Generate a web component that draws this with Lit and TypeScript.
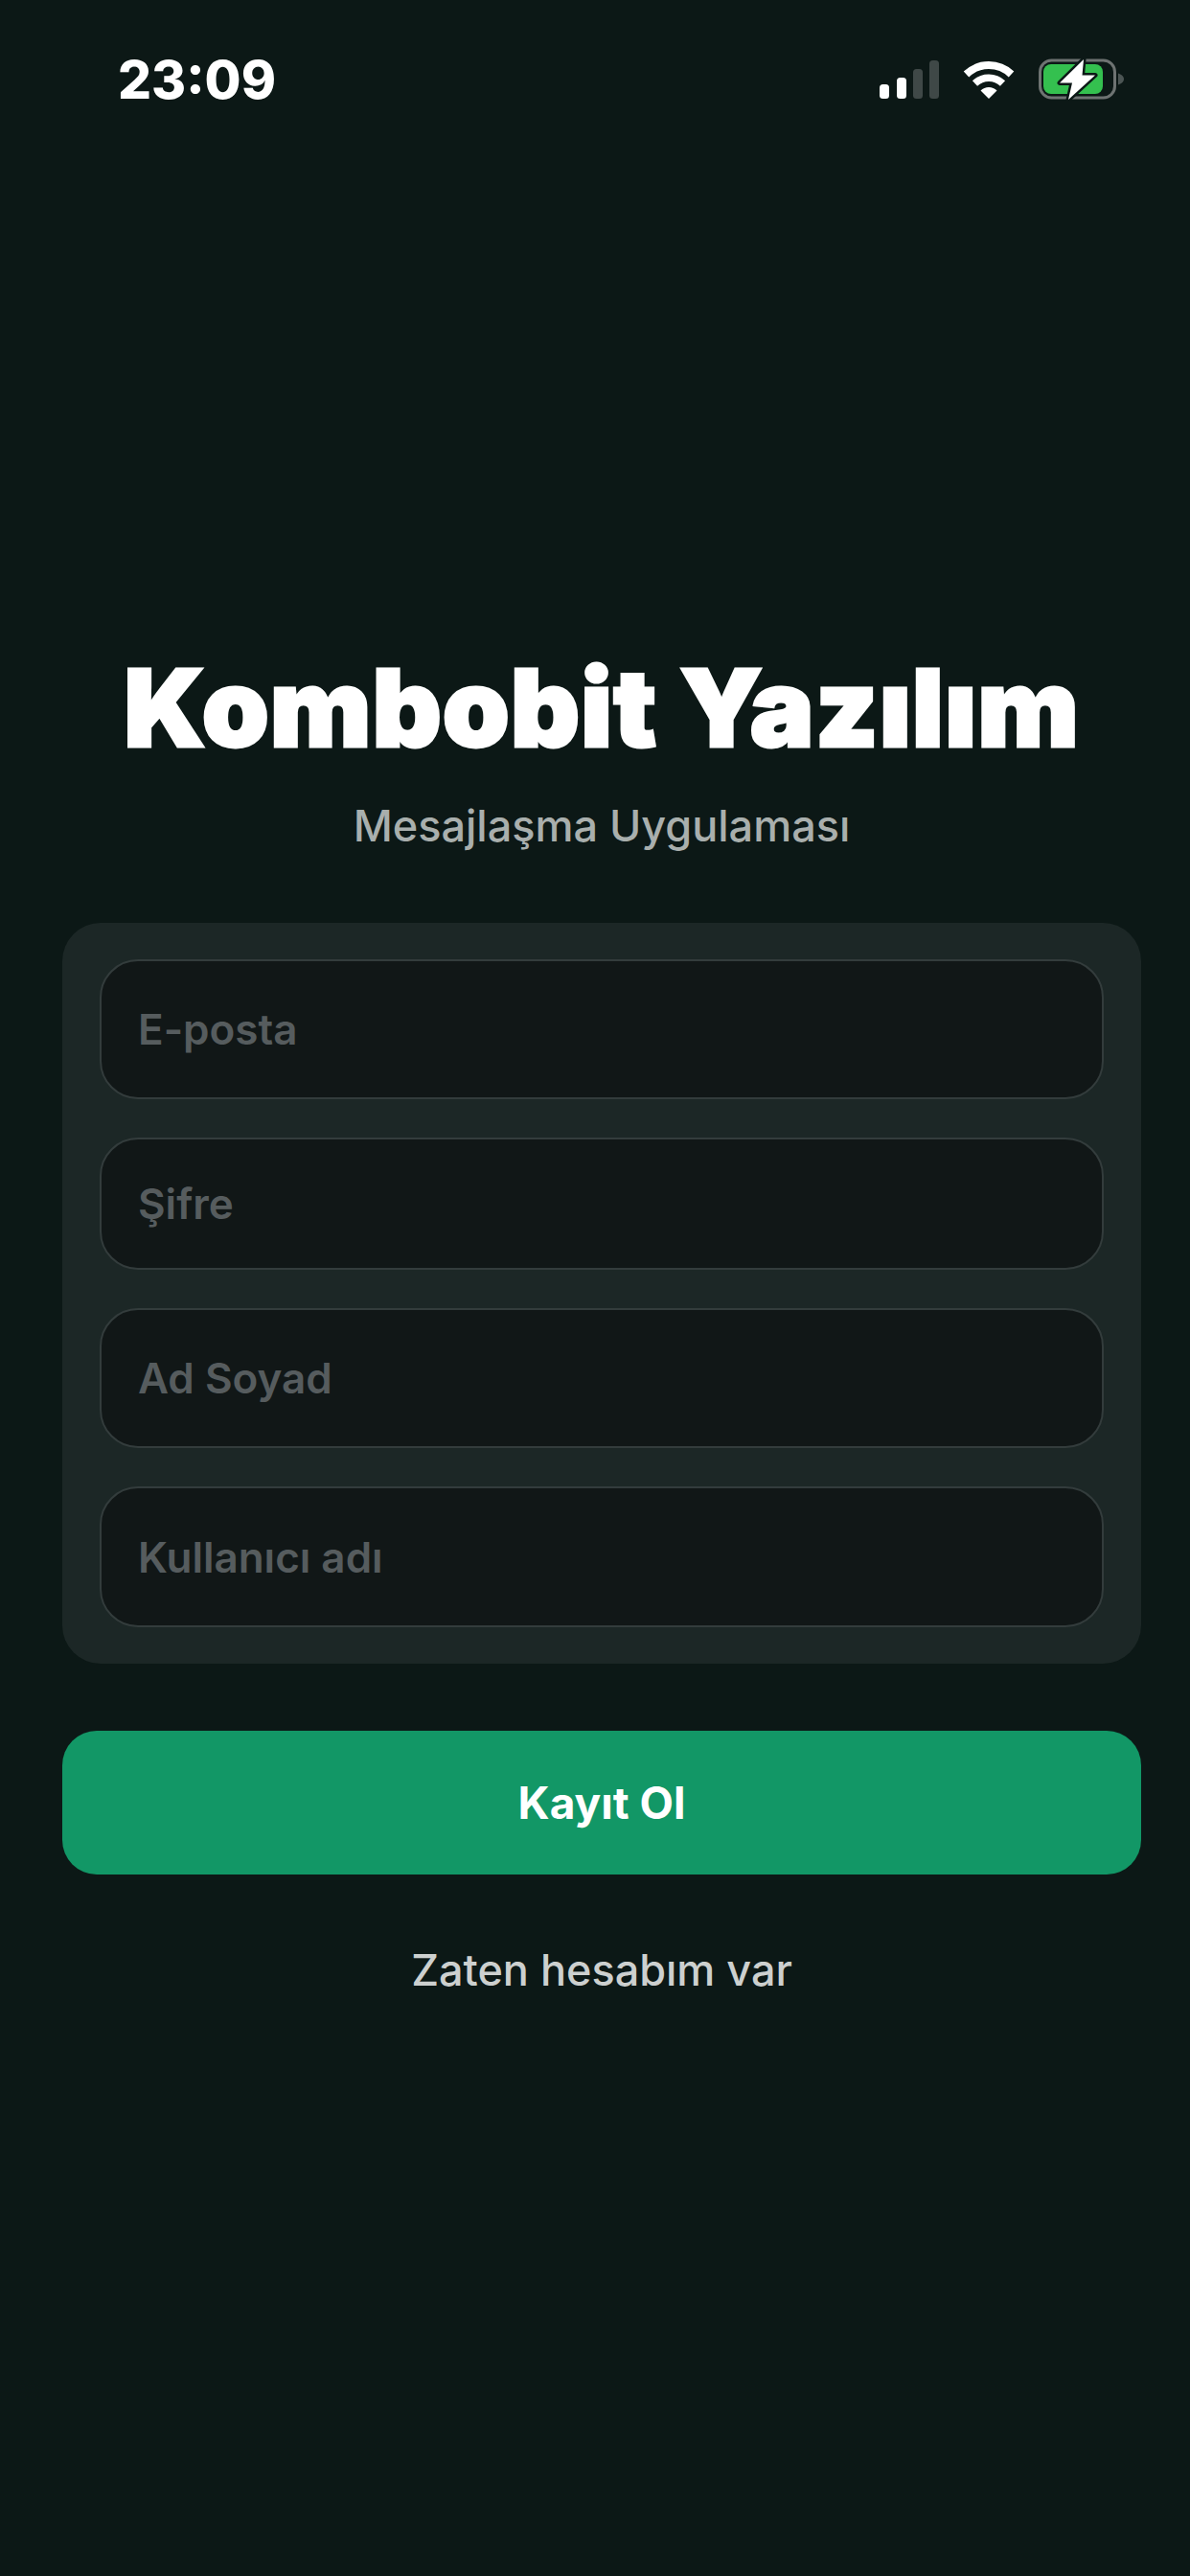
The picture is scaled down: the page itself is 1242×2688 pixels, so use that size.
import { html, css, LitElement, svg } from "lit";
import { customElement } from "lit/decorators.js";

const fields = [
  { label: "E-posta", height: 146 },
  { label: "Şifre", height: 138 },
  { label: "Ad Soyad", height: 146 },
  { label: "Kullanıcı adı", height: 147 },
];

const signalBars = [
  { x: 0, y: 25, h: 15, on: true },
  { x: 18, y: 18, h: 22, on: true },
  { x: 35, y: 9, h: 31, on: false },
  { x: 52, y: 0, h: 40, on: false },
];

@customElement("app-root")
export class AppRoot extends LitElement {
  static styles = css`
    :host {
      display: block;
      width: 1242px;
      height: 2688px;
      background: #0c1816;
      font-family: Inter, "Liberation Sans", sans-serif;
      color: #fff;
      overflow: hidden;
    }
    .status {
      display: flex;
      align-items: center;
      justify-content: space-between;
      height: 44px;
      padding: 61px 68px 0 123px;
    }
    .time {
      font-size: 55px;
      font-weight: 800;
      line-height: 44px;
    }
    .icons {
      display: flex;
      align-items: center;
    }
    .icons svg {
      display: block;
    }
    .wifi,
    .battery {
      margin-left: 25px;
    }
    .main {
      display: flex;
      flex-direction: column;
      padding: 563px 51px 0 65px;
    }
    .head {
      display: flex;
      flex-direction: column;
      align-items: center;
    }
    h1 {
      margin: 0;
      font-size: 112px;
      font-weight: 900;
      line-height: 140px;
      letter-spacing: 1px;
      white-space: nowrap;
      -webkit-text-stroke: 3px #fff;
    }
    .sub {
      margin-top: 29px;
      font-size: 45px;
      font-weight: 500;
      line-height: 50px;
      color: #a9afad;
    }
    .card {
      display: flex;
      flex-direction: column;
      gap: 40px;
      margin-top: 76px;
      padding: 38px 39px;
      background: #1c2726;
      border-radius: 40px;
    }
    .field {
      display: flex;
      align-items: center;
      box-sizing: border-box;
      padding-left: 38px;
      background: #111717;
      border: 2px solid #333c3c;
      border-radius: 40px;
      font-size: 44px;
      font-weight: 600;
      color: #565c5e;
    }
    .submit {
      display: flex;
      align-items: center;
      justify-content: center;
      height: 150px;
      margin-top: 70px;
      background: #129766;
      border-radius: 36px;
      font-size: 46px;
      font-weight: 700;
    }
    .login {
      margin-top: 75px;
      font-size: 45px;
      font-weight: 500;
      line-height: 50px;
      text-align: center;
      color: #cdd0cf;
    }
  `;

  private renderStatusIcons() {
    return html`
      <div class="icons">
        <svg width="62" height="40" viewBox="0 0 62 40">
          ${signalBars.map(
            (b) => svg`<rect x=${b.x} y=${b.y} width="10" height=${b.h} rx="3.5" fill=${b.on ? "#ffffff" : "#3f4847"} />`
          )}
        </svg>
        <svg class="wifi" width="54" height="40" viewBox="0 0 54 40">
          <path d="M3.5 14.5a34 34 0 0 1 47 0" fill="none" stroke="#fff" stroke-width="8" />
          <path d="M12.5 24a21 21 0 0 1 29 0" fill="none" stroke="#fff" stroke-width="7.5" />
          <path d="M18.5 31.5a12 12 0 0 1 17 0L27 40z" fill="#fff" />
        </svg>
        <svg class="battery" width="90" height="44" viewBox="0 0 90 44">
          <rect x="1.5" y="2" width="78" height="39" rx="12" fill="none" stroke="#6e7372" stroke-width="3" />
          <rect x="5" y="6" width="62" height="31" rx="8" fill="#34c04f" />
          <path d="M83 15.5c3 1 6 3 6 6s-3 5-6 6z" fill="#4c5554" />
          <path
            d="M47 1 22 25.5H35L31 43 59 17.5H45.5z"
            fill="#fff"
            stroke="#0c1816"
            stroke-width="5"
            stroke-linejoin="round"
            paint-order="stroke"
          />
        </svg>
      </div>
    `;
  }

  override render() {
    return html`
      <div class="status">
        <span class="time">23:09</span>
        ${this.renderStatusIcons()}
      </div>
      <div class="main">
        <div class="head">
          <h1>Kombobit Yazılım</h1>
          <div class="sub">Mesajlaşma Uygulaması</div>
        </div>
        <div class="card">
          ${fields.map(
            (f) => html`<div class="field" style="height:${f.height}px">${f.label}</div>`
          )}
        </div>
        <div class="submit">Kayıt Ol</div>
        <div class="login">Zaten hesabım var</div>
      </div>
    `;
  }
}
